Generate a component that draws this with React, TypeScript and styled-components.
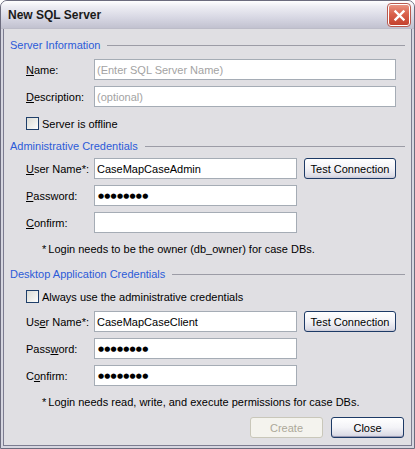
import React from 'react';
import styled, { createGlobalStyle } from 'styled-components';

const GlobalStyle = createGlobalStyle`
  html, body {
    margin: 0;
    padding: 0;
    background: #ffffff;
  }
  body {
    font-family: "Liberation Sans", Arial, sans-serif;
    font-size: 11px;
  }
`;

const Window = styled.div`
  width: 415px;
  height: 449px;
  box-sizing: border-box;
  display: flex;
  flex-direction: column;
  border: 1px solid #6c6c7e;
  border-radius: 7px 7px 0 0;
  background: #d6d6e0;
  overflow: hidden;
`;

const TitleBar = styled.div`
  height: 27px;
  flex: none;
  display: flex;
  align-items: center;
  justify-content: space-between;
  padding: 0 4px 0 7px;
  background: linear-gradient(to bottom, #ffffff 0%, #eeeef4 20%, #d8d8e4 60%, #c2c2d0 100%);
  border-bottom: 1px solid #bcbcc8;
`;

const Title = styled.div`
  font-size: 12px;
  font-weight: bold;
  color: #1a1a1a;
  padding-top: 1px;
`;

const CloseButton = styled.div`
  width: 20px;
  height: 20px;
  border: 1px solid #ffffff;
  outline: 1px solid #b75a50;
  border-radius: 3px;
  background: linear-gradient(to bottom, #e99482 0%, #d9614c 45%, #c4422f 100%);
  display: flex;
  align-items: center;
  justify-content: center;
  margin-top: 1px;
`;

const Client = styled.div`
  flex: 1;
  margin: 0 2px 2px 2px;
  border: 1px solid #7c7c90;
  border-top: none;
  background: #e0dfe3;
  padding: 0 6px;
  display: flex;
  flex-direction: column;
  color: #000000;
`;

const Legend = styled.div<{ $top: number }>`
  margin-top: ${(p) => p.$top}px;
  height: 14px;
  display: flex;
  align-items: center;
  gap: 7px;
  color: #2c5bd8;
  &::after {
    content: '';
    flex: 1;
    height: 1px;
    background: #9c9ca6;
  }
`;

const Form = styled.div<{ $top: number }>`
  margin-top: ${(p) => p.$top}px;
  margin-left: 16px;
  display: grid;
  grid-template-columns: 61px 203px 92px;
  column-gap: 7px;
  row-gap: 6px;
  align-items: center;
`;

const Label = styled.label`
  white-space: nowrap;
`;

const TextBox = styled.div<{ $wide?: boolean; $hint?: boolean }>`
  grid-column: ${(p) => (p.$wide ? '2 / span 2' : '2')};
  height: 21px;
  box-sizing: border-box;
  border: 1px solid #a5acb5;
  background: #ffffff;
  display: flex;
  align-items: center;
  padding: 0 2px;
  color: ${(p) => (p.$hint ? '#a3a3a3' : '#000000')};
  white-space: nowrap;
  overflow: hidden;
`;

const Dots = styled.span`
  font-family: "DejaVu Sans", sans-serif;
  font-size: 7px;
  letter-spacing: 0.2px;
  padding-left: 1px;
`;

const Button = styled.div<{ $disabled?: boolean; $default?: boolean }>`
  height: 21px;
  box-sizing: border-box;
  border: 1px solid ${(p) => (p.$disabled ? '#c9c7ba' : '#1d3a66')};
  border-radius: 3px;
  background: ${(p) =>
    p.$disabled
      ? '#f4f3ee'
      : 'linear-gradient(to bottom, #ffffff 0%, #f3f3f7 50%, #dcdce6 90%, #c8c8d6 100%)'};
  color: ${(p) => (p.$disabled ? '#aca899' : '#000000')};
  display: flex;
  align-items: center;
  justify-content: center;
  box-shadow: ${(p) => (p.$default ? 'inset 0 -1px 0 #9a9ab4, inset 0 1px 0 #ffffff' : 'none')};
`;

const CheckRow = styled.div<{ $top: number }>`
  margin-top: ${(p) => p.$top}px;
  margin-left: 16px;
  height: 15px;
  display: flex;
  align-items: center;
  gap: 3px;
`;

const CheckBox = styled.span`
  width: 13px;
  height: 13px;
  box-sizing: border-box;
  border: 1px solid #1f3f6a;
  background: linear-gradient(135deg, #dcdcd6 0%, #f0f0ec 60%, #ffffff 100%);
`;

const Note = styled.div<{ $top: number }>`
  margin-top: ${(p) => p.$top}px;
  margin-left: 32px;
  height: 14px;
  display: flex;
  align-items: center;
  white-space: nowrap;
`;

const Star = styled.span`
  margin-right: 2px;
`;

const Footer = styled.div`
  margin-top: 8px;
  display: flex;
  justify-content: flex-end;
  gap: 8px;
  padding-right: 1px;
`;

const FooterButton = styled(Button)`
  width: 73px;
`;

const App: React.FC = () => {
  return (
    <>
      <GlobalStyle />
      <Window>
        <TitleBar>
          <Title>New SQL Server</Title>
          <CloseButton>
            <svg width="13" height="13" viewBox="0 0 13 13">
              <path d="M2.5 2.5 L10.5 10.5 M10.5 2.5 L2.5 10.5" stroke="#ffffff" strokeWidth="2.4" strokeLinecap="square" />
            </svg>
          </CloseButton>
        </TitleBar>
        <Client>
          <Legend $top={9}>Server Information</Legend>
          <Form $top={7}>
            <Label><u>N</u>ame:</Label>
            <TextBox $wide $hint>(Enter SQL Server Name)</TextBox>
            <Label><u>D</u>escription:</Label>
            <TextBox $wide $hint>(optional)</TextBox>
          </Form>
          <CheckRow $top={9}>
            <CheckBox />
            <span>Server is offline</span>
          </CheckRow>

          <Legend $top={8}>Administrative Credentials</Legend>
          <Form $top={5}>
            <Label><u>U</u>ser Name*:</Label>
            <TextBox>CaseMapCaseAdmin</TextBox>
            <Button>Test Connection</Button>
            <Label><u>P</u>assword:</Label>
            <TextBox><Dots>●●●●●●●●</Dots></TextBox>
            <span />
            <Label><u>C</u>onfirm:</Label>
            <TextBox />
            <span />
          </Form>
          <Note $top={9}><Star>*</Star>Login needs to be the owner (db_owner) for case DBs.</Note>

          <Legend $top={11}>Desktop Application Credentials</Legend>
          <CheckRow $top={8}>
            <CheckBox />
            <span>Always use the administrative credentials</span>
          </CheckRow>
          <Form $top={7}>
            <Label>Us<u>e</u>r Name*:</Label>
            <TextBox>CaseMapCaseClient</TextBox>
            <Button>Test Connection</Button>
            <Label>Pass<u>w</u>ord:</Label>
            <TextBox><Dots>●●●●●●●●</Dots></TextBox>
            <span />
            <Label>C<u>o</u>nfirm:</Label>
            <TextBox><Dots>●●●●●●●●</Dots></TextBox>
            <span />
          </Form>
          <Note $top={9}><Star>*</Star>Login needs read, write, and execute permissions for case DBs.</Note>

          <Footer>
            <FooterButton $disabled>Create</FooterButton>
            <FooterButton $default>Close</FooterButton>
          </Footer>
        </Client>
      </Window>
    </>
  );
};

export default App;
